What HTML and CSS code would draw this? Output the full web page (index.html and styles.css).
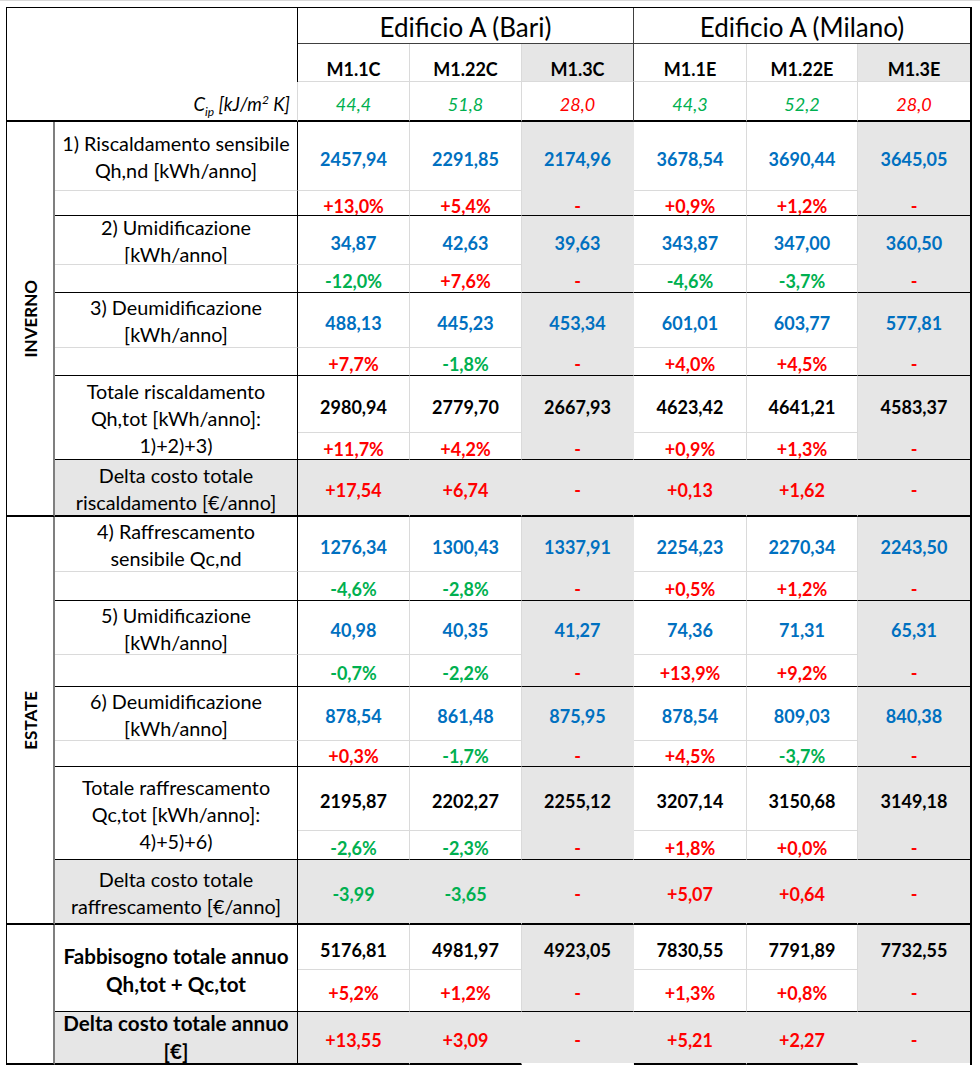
FILE: index.html
```html
<!DOCTYPE html>
<html lang="it">
<head>
<meta charset="utf-8">
<title>Confronto fabbisogni energetici</title>
<link rel="stylesheet" href="styles.css">
</head>
<body>
<div class="sheet">
  <div class="corner"></div>
  <div class="bldg">Edificio A (Bari)</div>
  <div class="bldg mil">Edificio A (Milano)</div>

  <div class="row models">
    <div class="c">M1.1C</div><div class="c">M1.22C</div><div class="c">M1.3C</div>
    <div class="c">M1.1E</div><div class="c">M1.22E</div><div class="c">M1.3E</div>
  </div>
  <div class="row cips">
    <div class="c ciplbl"><span>C<sub>ip</sub></span>&nbsp;<span>[kJ/m<sup>2</sup>&nbsp;K]</span></div>
    <div class="c gr">44,4</div><div class="c gr">51,8</div><div class="c r">28,0</div>
    <div class="c gr">44,3</div><div class="c gr">52,2</div><div class="c r">28,0</div>
  </div>

  <div class="sec"><span>INVERNO</span></div>
  <div class="row v blue">
    <div class="c lbl">1) Riscaldamento sensibile<br>Qh,nd [kWh/anno]</div>
    <div class="c">2457,94</div><div class="c">2291,85</div><div class="c">2174,96</div>
    <div class="c">3678,54</div><div class="c">3690,44</div><div class="c">3645,05</div>
  </div>
  <div class="row p">
    <div class="c lbl"></div>
    <div class="c r">+13,0%</div><div class="c r">+5,4%</div><div class="c r">-</div>
    <div class="c r">+0,9%</div><div class="c r">+1,2%</div><div class="c r">-</div>
  </div>
  <div class="row v blue">
    <div class="c lbl">2) Umidificazione<br>[kWh/anno]</div>
    <div class="c">34,87</div><div class="c">42,63</div><div class="c">39,63</div>
    <div class="c">343,87</div><div class="c">347,00</div><div class="c">360,50</div>
  </div>
  <div class="row p">
    <div class="c lbl"></div>
    <div class="c gr">-12,0%</div><div class="c r">+7,6%</div><div class="c r">-</div>
    <div class="c gr">-4,6%</div><div class="c gr">-3,7%</div><div class="c r">-</div>
  </div>
  <div class="row v blue">
    <div class="c lbl">3) Deumidificazione<br>[kWh/anno]</div>
    <div class="c">488,13</div><div class="c">445,23</div><div class="c">453,34</div>
    <div class="c">601,01</div><div class="c">603,77</div><div class="c">577,81</div>
  </div>
  <div class="row p">
    <div class="c lbl"></div>
    <div class="c r">+7,7%</div><div class="c gr">-1,8%</div><div class="c r">-</div>
    <div class="c r">+4,0%</div><div class="c r">+4,5%</div><div class="c r">-</div>
  </div>
  <div class="row v">
    <div class="c lbl span2">Totale riscaldamento<br>Qh,tot [kWh/anno]:<br>1)+2)+3)</div>
    <div class="c">2980,94</div><div class="c">2779,70</div><div class="c">2667,93</div>
    <div class="c">4623,42</div><div class="c">4641,21</div><div class="c">4583,37</div>
  </div>
  <div class="row p">
    <div class="c r">+11,7%</div><div class="c r">+4,2%</div><div class="c r">-</div>
    <div class="c r">+0,9%</div><div class="c r">+1,3%</div><div class="c r">-</div>
  </div>
  <div class="row t dl">
    <div class="c lbl">Delta costo totale<br>riscaldamento [€/anno]</div>
    <div class="c r">+17,54</div><div class="c r">+6,74</div><div class="c r">-</div>
    <div class="c r">+0,13</div><div class="c r">+1,62</div><div class="c r">-</div>
  </div>

  <div class="sec"><span>ESTATE</span></div>
  <div class="row v blue">
    <div class="c lbl">4) Raffrescamento<br>sensibile Qc,nd</div>
    <div class="c">1276,34</div><div class="c">1300,43</div><div class="c">1337,91</div>
    <div class="c">2254,23</div><div class="c">2270,34</div><div class="c">2243,50</div>
  </div>
  <div class="row p">
    <div class="c lbl"></div>
    <div class="c gr">-4,6%</div><div class="c gr">-2,8%</div><div class="c r">-</div>
    <div class="c r">+0,5%</div><div class="c r">+1,2%</div><div class="c r">-</div>
  </div>
  <div class="row v blue">
    <div class="c lbl">5) Umidificazione<br>[kWh/anno]</div>
    <div class="c">40,98</div><div class="c">40,35</div><div class="c">41,27</div>
    <div class="c">74,36</div><div class="c">71,31</div><div class="c">65,31</div>
  </div>
  <div class="row p">
    <div class="c lbl"></div>
    <div class="c gr">-0,7%</div><div class="c gr">-2,2%</div><div class="c r">-</div>
    <div class="c r">+13,9%</div><div class="c r">+9,2%</div><div class="c r">-</div>
  </div>
  <div class="row v blue">
    <div class="c lbl">6) Deumidificazione<br>[kWh/anno]</div>
    <div class="c">878,54</div><div class="c">861,48</div><div class="c">875,95</div>
    <div class="c">878,54</div><div class="c">809,03</div><div class="c">840,38</div>
  </div>
  <div class="row p">
    <div class="c lbl"></div>
    <div class="c r">+0,3%</div><div class="c gr">-1,7%</div><div class="c r">-</div>
    <div class="c r">+4,5%</div><div class="c gr">-3,7%</div><div class="c r">-</div>
  </div>
  <div class="row v">
    <div class="c lbl span2">Totale raffrescamento<br>Qc,tot [kWh/anno]:<br>4)+5)+6)</div>
    <div class="c">2195,87</div><div class="c">2202,27</div><div class="c">2255,12</div>
    <div class="c">3207,14</div><div class="c">3150,68</div><div class="c">3149,18</div>
  </div>
  <div class="row p">
    <div class="c gr">-2,6%</div><div class="c gr">-2,3%</div><div class="c r">-</div>
    <div class="c r">+1,8%</div><div class="c r">+0,0%</div><div class="c r">-</div>
  </div>
  <div class="row t dl">
    <div class="c lbl">Delta costo totale<br>raffrescamento [€/anno]</div>
    <div class="c gr">-3,99</div><div class="c gr">-3,65</div><div class="c r">-</div>
    <div class="c r">+5,07</div><div class="c r">+0,64</div><div class="c r">-</div>
  </div>

  <div class="sec sec3"></div>
  <div class="row v">
    <div class="c lbl strong span2">Fabbisogno totale annuo<br>Qh,tot + Qc,tot</div>
    <div class="c">5176,81</div><div class="c">4981,97</div><div class="c">4923,05</div>
    <div class="c">7830,55</div><div class="c">7791,89</div><div class="c">7732,55</div>
  </div>
  <div class="row p">
    <div class="c r">+5,2%</div><div class="c r">+1,2%</div><div class="c r">-</div>
    <div class="c r">+1,3%</div><div class="c r">+0,8%</div><div class="c r">-</div>
  </div>
  <div class="row last dl">
    <div class="c lbl strong tight">Delta costo totale annuo<br>[€]</div>
    <div class="c r">+13,55</div><div class="c r">+3,09</div><div class="c r">-</div>
    <div class="c r">+5,21</div><div class="c r">+2,27</div><div class="c r">-</div>
  </div>
</div>
</body>
</html>
```

FILE: styles.css
```css
:root {
  --blue: #0070c0;
  --red: #ff0000;
  --green: #00b050;
  --gray: #e6e6e6;
  --ln: #dadada;
  --dark: #404040;
}

* { box-sizing: border-box; }

html, body {
  margin: 0;
  background: #fff;
}

body {
  border-top: 1px solid #d9d9d9;
  font-family: Lato, "Liberation Sans", sans-serif;
  color: #000;
}

.sheet {
  display: grid;
  grid-template-columns: 48px 243px 112px 112px 112px 113px 111px 112px;
  grid-template-rows: 36px 38px 40px 69px 25px 49px 28px 55px 28px 57px 27px 57px 55px 29px 54px 32px 54px 26px 64px 29px 65px 45px 42px 53px;
  width: max-content;
  margin: 6px 0 0 6px;
  border-top: 1px solid #000;
  border-left: 1px solid #000;
  border-right: 2px solid #000;
}

.corner {
  grid-column: span 2;
  grid-row: span 2;
  border-right: 1px solid #000;
}

.bldg {
  grid-column: span 3;
  display: flex;
  align-items: center;
  justify-content: center;
  padding-top: 2px;
  font-size: 26px;
  border-right: 1px solid var(--dark);
  border-bottom: 1px solid var(--dark);
}

.bldg.mil { border-right: 0; }

.row { display: contents; }

.c {
  display: flex;
  align-items: center;
  justify-content: center;
  text-align: center;
  overflow: hidden;
  padding-top: 5px;
  font-size: 18px;
  font-weight: 700;
  line-height: 28px;
  border-right: 1px solid var(--ln);
  border-bottom: 1px solid var(--ln);
}

.row > .c:last-child { border-right: 0; }
.row > .c:nth-last-child(4),
.row > .c:last-child { background: var(--gray); }
.row > .c:nth-last-child(4) { border-right-color: var(--gray); }
.row.v > .c:nth-last-child(4),
.row.v > .c:last-child { border-bottom-color: var(--gray); }

.models > .c { padding-top: 12px; }
.models > .c:nth-last-child(4),
.cips > .c:nth-last-child(4) { border-right-color: var(--dark); }

.cips > .c {
  background: #fff;
  font-weight: 400;
  font-style: italic;
  border-bottom: 2px solid #000;
}
.cips > .c:nth-last-child(4),
.cips > .c:last-child { background: #fff; }

.ciplbl {
  grid-column: span 2;
  justify-content: flex-end;
  padding-right: 7px;
}
.row > .c.ciplbl { font-size: 18.5px; }
.ciplbl sub, .ciplbl sup { font-size: 12px; line-height: 0; }

.blue > .c { color: var(--blue); }
.r { color: var(--red); }
.gr { color: var(--green); }

.p > .c { border-bottom-color: #000; }
.t > .c { border-bottom: 2px solid #000; }
.last > .c { border-bottom: 2px solid #000; }
.last > .c:nth-last-child(4),
.last > .c:last-child { border-bottom-color: #fff; }
.dl > .c { background: var(--gray); border-right-color: var(--gray); }

.row > .c.lbl {
  color: #000;
  font-weight: 400;
  font-size: 19.8px;
  line-height: 27px;
  padding-top: 2px;
  border-right: 1px solid #000;
}
.row > .c.strong {
  font-weight: 700;
  font-size: 20.6px;
  line-height: 28px;
  padding-top: 4px;
}
.row > .c.tight {
  line-height: 27.5px;
  padding-top: 0;
}
.row > .c.span2 {
  grid-row: span 2;
  border-bottom: 1px solid #000;
}

.sec {
  grid-row: span 9;
  display: flex;
  align-items: center;
  justify-content: center;
  border-right: 2px solid #7f7f7f;
  border-bottom: 2px solid #000;
  font-size: 17px;
  font-weight: 700;
}
.sec span {
  writing-mode: vertical-rl;
  transform: rotate(180deg);
}
.sec3 { grid-row: span 3; }
```
